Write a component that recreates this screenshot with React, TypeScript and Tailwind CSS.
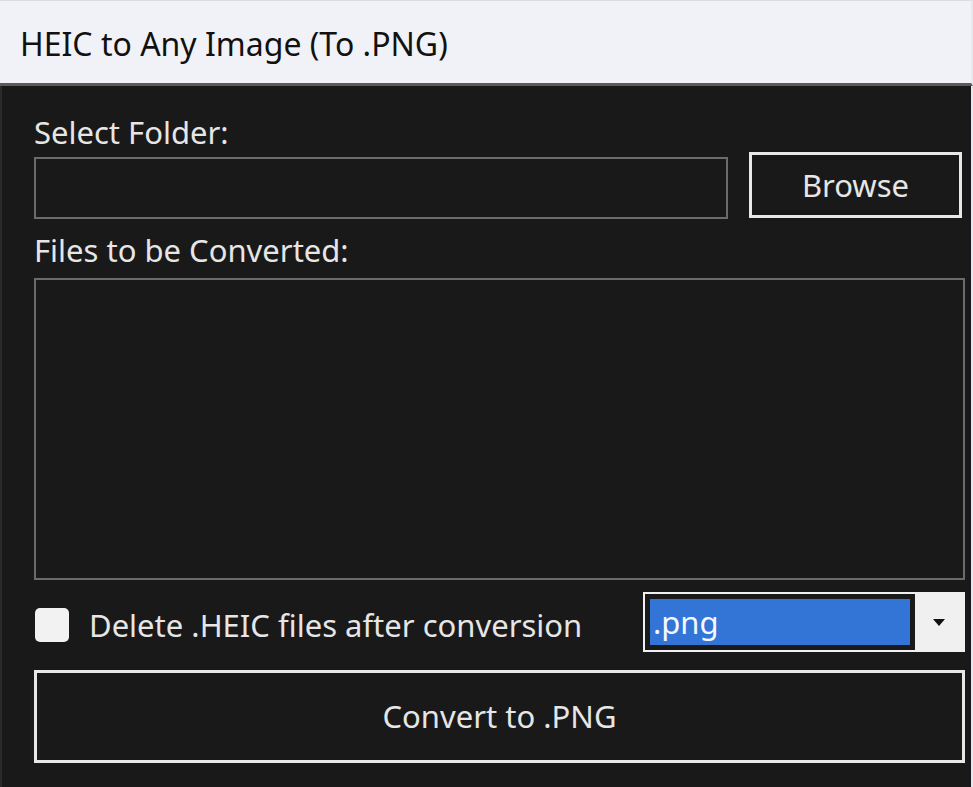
import React from 'react';

const uiFont = { fontFamily: '"Noto Sans", "Open Sans", sans-serif' };

const App: React.FC = () => {
  return (
    <div className="w-[973px] h-[787px] flex flex-col overflow-hidden bg-[#191919]" style={uiFont}>
      {/* window title bar */}
      <div className="h-[86px] shrink-0 flex items-center pl-[20px] pt-[3px] bg-[#f1f2f7] border-t border-t-[#dcdde2] border-b-[3px] border-b-[#5a5a5a] border-r-2 border-r-[#e8e8ec]">
        <span className="text-[32px] text-[#111] leading-none">HEIC to Any Image (To .PNG)</span>
      </div>

      <div className="flex-1 flex flex-col pl-[32px] pr-[9px] border-l-2 border-l-[#2a2a2a] border-r-2 border-r-[#e8e8ec]">
        <label className="mt-[30px] h-[32px] text-[31px] leading-[32px] text-[#e6e6e6]">Select Folder:</label>

        <div className="mt-[4px] flex items-start">
          <div className="mt-[5px] h-[62px] w-[697px] border-2 border-[#6b6b6b] bg-[#191919]" />
          <button className="ml-[21px] h-[66px] w-[214px] border-[3px] border-[#e8e8e8] text-[31px] text-[#e6e6e6] bg-[#191919]">
            Browse
          </button>
        </div>

        <label className="mt-[15px] h-[32px] text-[31px] leading-[32px] text-[#e6e6e6]">Files to be Converted:</label>

        <div className="mt-[12px] h-[302px] w-[931px] border-2 border-[#6b6b6b]" />

        <div className="mt-[12px] flex items-center w-[931px]">
          <div className="mt-[6px] w-[34px] h-[34px] rounded-[5px] bg-[#f2f2f2] ml-px" />
          <span className="ml-[20px] mt-[6px] text-[31px] leading-[34px] text-[#e6e6e6]">Delete .HEIC files after conversion</span>
          {/* format picker */}
          <div className="ml-auto h-[60px] w-[322px] border-2 border-[#f0f0f0] flex bg-[#f0f0f0]">
            <div className="flex-1 border-[5px] border-[#1a1a1a] bg-[#1a1a1a] flex">
              <div className="flex-1 bg-[#3375d6] flex items-center pl-[3px] text-[31px] leading-none text-[#f4f8ff]">.png</div>
            </div>
            <div className="w-[48px] flex items-center justify-center">
              <svg width="12" height="7" viewBox="0 0 12 7">
                <path d="M0 0 H12 L6 7 Z" fill="#111" />
              </svg>
            </div>
          </div>
        </div>

        <button className="mt-[18px] h-[93px] w-[931px] border-[3px] border-[#e8e8e8] text-[31px] text-[#e6e6e6] bg-[#191919]">
          Convert to .PNG
        </button>
      </div>
    </div>
  );
};

export default App;
